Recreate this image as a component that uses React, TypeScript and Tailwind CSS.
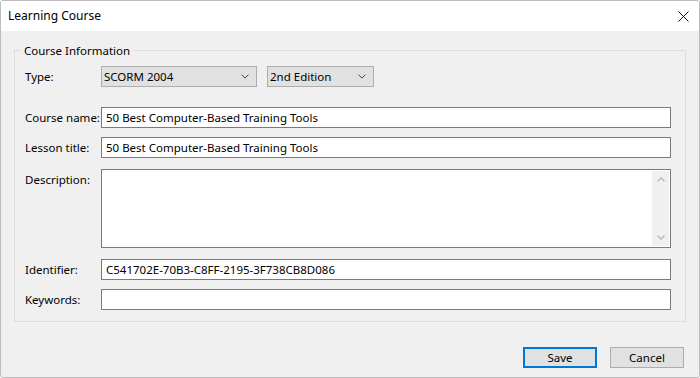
import { ReactNode } from "react";

const font = { fontFamily: '"Noto Sans", "Segoe UI", sans-serif' };

function Chevron({ className, bold }: { className?: string; bold?: boolean }) {
  return (
    <svg width="8" height="5" viewBox="0 0 8 5" className={className}>
      <path d="M0.5 0.6 L4 4.1 L7.5 0.6" fill="none" stroke="currentColor" strokeWidth={bold ? 1.8 : 1} />
    </svg>
  );
}

function Select({ value, width }: { value: string; width: string }) {
  return (
    <div
      className={`${width} h-[21px] flex items-center justify-between border border-[#adadad] bg-[#e1e1e1] pl-[2px] pr-[7px]`}
    >
      <span>{value}</span>
      <Chevron className="text-[#444]" />
    </div>
  );
}

function TextBox({ value }: { value?: string }) {
  return (
    <div className="flex-1 h-[21px] flex items-center border border-[#7a7a7a] bg-white px-[4px]">
      {value}
    </div>
  );
}

function Row({ label, children, className }: { label: string; children: ReactNode; className?: string }) {
  return (
    <div className={`flex items-start ${className ?? ""}`}>
      <div className="w-[76px] h-[21px] flex items-center shrink-0 whitespace-nowrap">{label}</div>
      {children}
    </div>
  );
}

export default function App() {
  return (
    <div
      className="w-[700px] h-[378px] flex flex-col bg-[#f0f0f0] border border-[#bcbcbc] rounded-[3px] overflow-hidden text-[11.5px] text-black whitespace-nowrap"
      style={font}
    >
      {/* title bar */}
      <div className="h-[30px] shrink-0 bg-white flex items-center justify-between pl-[7px] pr-[10px] text-[12px]">
        <span>Learning Course</span>
        <svg width="11" height="11" viewBox="0 0 11 11">
          <path d="M0.5 0.5 L10.5 10.5 M10.5 0.5 L0.5 10.5" stroke="#111" strokeWidth="1" />
        </svg>
      </div>

      {/* group box */}
      <div className="relative mx-[13px] mt-[19px] h-[272px] border border-[#dcdcdc] pt-[15px] pl-[10px] pr-[14px]">
        <span className="absolute -top-[9px] left-[6px] bg-[#f0f0f0] px-[3px]">Course Information</span>

        <Row label="Type:">
          <div className="flex gap-[10px]">
            <Select value="SCORM 2004" width="w-[156px]" />
            <Select value="2nd Edition" width="w-[107px]" />
          </div>
        </Row>

        <Row label="Course name:" className="mt-[20px]">
          <TextBox value="50 Best Computer-Based Training Tools" />
        </Row>

        <Row label="Lesson title:" className="mt-[9px]">
          <TextBox value="50 Best Computer-Based Training Tools" />
        </Row>

        <Row label="Description:" className="mt-[11px]">
          <div className="flex-1 h-[79px] flex border border-[#7a7a7a] bg-white">
            <div className="flex-1" />
            <div className="w-[17px] my-[1px] mr-[1px] bg-[#f0f0f0] flex flex-col items-center justify-between py-[6px] text-[#c2c2c2]">
              <Chevron className="rotate-180" bold />
              <Chevron bold />
            </div>
          </div>
        </Row>

        <Row label="Identifier:" className="mt-[11px]">
          <TextBox value="C541702E-70B3-C8FF-2195-3F738CB8D086" />
        </Row>

        <Row label="Keywords:" className="mt-[9px]">
          <TextBox />
        </Row>
      </div>

      {/* buttons */}
      <div className="flex justify-end gap-[13px] mt-[25px] pr-[15px]">
        <button className="w-[74px] h-[21px] bg-[#e1e1e1] border-2 border-[#0078d7]">Save</button>
        <button className="w-[74px] h-[21px] bg-[#e1e1e1] border border-[#adadad]">Cancel</button>
      </div>
    </div>
  );
}
